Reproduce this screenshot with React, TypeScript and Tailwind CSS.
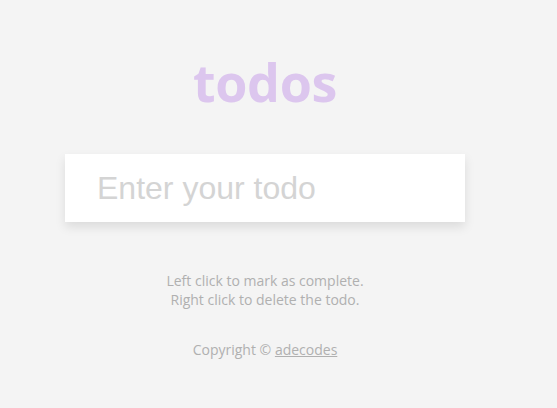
import { useState } from "react";

export default function App() {
  const [todo, setTodo] = useState("");

  return (
    <main className="min-h-screen bg-[#f4f4f4] font-['Open_Sans',sans-serif]">
      <div className="w-[530px] flex flex-col items-center pt-[50px]">
        <h1 className="text-[52px] leading-[64px] font-bold text-[#dcc6ee] tracking-[-0.3px]">todos</h1>
        <form
          onSubmit={e => { e.preventDefault(); setTodo(""); }}
          className="mt-[40px] w-[400px]"
        >
          <input
            value={todo}
            onChange={e => setTodo(e.target.value)}
            placeholder="Enter your todo"
            className="w-full h-[68px] bg-white pl-8 pr-4 text-[32px] font-['Liberation_Sans',Arial,sans-serif] text-[#555] placeholder:text-[#d4d4d4] outline-none shadow-[0_5px_10px_rgba(0,0,0,0.1)]"
          />
        </form>
        <div className="mt-[49px] text-[14px] leading-[19px] text-[#b0b0b0] text-center">
          <p>Left click to mark as complete.</p>
          <p>Right click to delete the todo.</p>
        </div>
        <p className="mt-[31px] text-[14px] leading-[19px] text-[#b0b0b0]">
          Copyright © <a href="#" className="underline">adecodes</a>
        </p>
      </div>
    </main>
  );
}
